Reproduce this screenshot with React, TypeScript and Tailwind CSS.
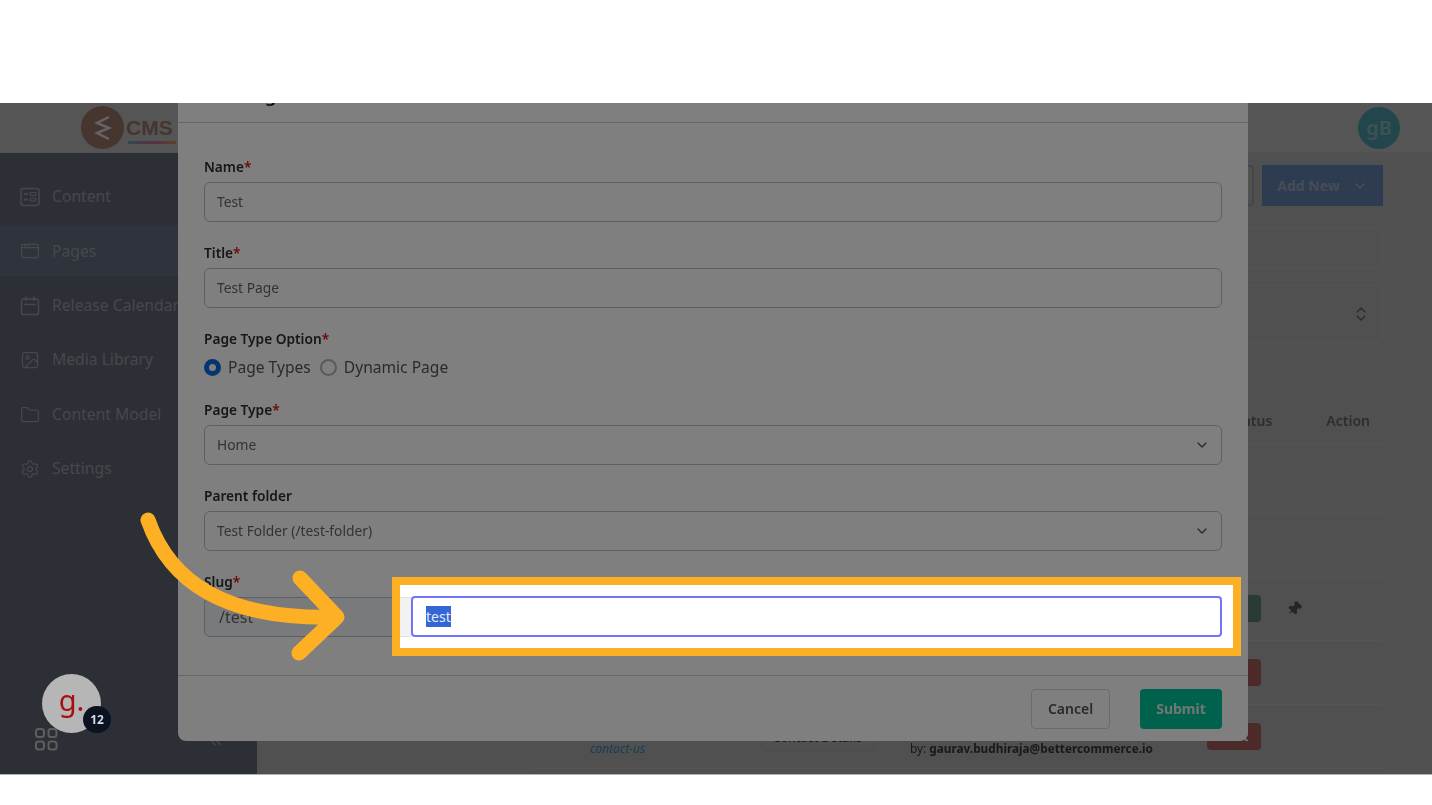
import { AppWindow, ChevronDown, ChevronsLeft, ChevronsUpDown, Folder, Image, Pin, Settings } from "lucide-react";

// ================= SIDEBAR ICONS =================
function ContentIcon() {
  return (
    <svg width="20" height="20" viewBox="0 0 20 20" fill="none" stroke="currentColor" strokeWidth="1.5" strokeLinecap="round">
      <rect x="1" y="1.5" width="18" height="17" rx="2.5" />
      <path d="M4.5 7h2.5M4.5 12.5h2.5" strokeWidth="2" />
      <rect x="10" y="5.5" width="6" height="3" rx="1" strokeWidth="1.2" />
      <rect x="10" y="11" width="6" height="3" rx="1" strokeWidth="1.2" />
    </svg>
  );
}

function CalendarIcon() {
  return (
    <svg width="20" height="20" viewBox="0 0 20 20" fill="none" stroke="currentColor" strokeWidth="1.5" strokeLinecap="round">
      <rect x="1.5" y="3" width="17" height="15.5" rx="2" />
      <path d="M6 1v3.5M14 1v3.5M5 8.5h10" />
    </svg>
  );
}

const navItems = [
  { label: "Content", icon: <ContentIcon /> },
  { label: "Pages", icon: <AppWindow size={20} strokeWidth={1.5} />, active: true },
  { label: "Release Calendar", icon: <CalendarIcon /> },
  { label: "Media Library", icon: <Image size={20} strokeWidth={1.5} /> },
  { label: "Content Model", icon: <Folder size={20} strokeWidth={1.5} /> },
  { label: "Settings", icon: <Settings size={20} strokeWidth={1.5} /> },
];

const rowBadges = [
  { id: 1, color: "" },
  { id: 2, color: "" },
  { id: 3, color: "bg-[#557568]", pin: true },
  { id: 4, color: "bg-[#9a5454]" },
  { id: 5, color: "bg-[#9a5454]", label: "Start", slug: "contact-us", type: "Contact Details" },
];

// ================= FORM PARTS =================
function Label({ text, required }: { text: string; required?: boolean }) {
  return (
    <p className="h-5 text-[13.7px] leading-5 font-semibold text-[#2e2e2e]">
      {text}
      {required && <span className="text-[#d01515]">*</span>}
    </p>
  );
}

function Field({ value, select }: { value: string; select?: boolean }) {
  return (
    <div className="mt-[5px] mb-[21px] flex h-10 items-center justify-between rounded-md border-[1.5px] border-[#bdbfc4] bg-white pr-[11px] pl-3 text-[13.8px] text-[#666666]">
      <span>{value}</span>
      {select && <ChevronDown size={16} strokeWidth={2} className="text-[#555555]" />}
    </div>
  );
}

function Radio({ label, checked }: { label: string; checked?: boolean }) {
  return (
    <span className="flex items-center gap-[7px] text-[15.6px] leading-5 text-[#555555]">
      {checked ? (
        <span className="h-[17px] w-[17px] rounded-full border-[5px] border-[#0a6ae0] bg-white" />
      ) : (
        <span className="h-[17px] w-[17px] rounded-full border-2 border-[#b5b5b5] bg-white" />
      )}
      {label}
    </span>
  );
}

// ================= COMPONENT =================
export default function App() {
  return (
    <div className="flex h-[805px] w-full flex-col overflow-hidden bg-white [font-family:'Noto_Sans',sans-serif]">
      <div className="h-[103px] shrink-0" />

      <div className="relative h-[671px] shrink-0 overflow-hidden bg-[#a0a0a0]">
        {/* PAGE BEHIND THE DIALOG */}
        <div className="flex h-full flex-col blur-[0.5px]">
          <header className="flex h-[50px] shrink-0 items-center justify-between border-b border-[#a4a4a4] bg-[#aaaaaa] pr-[32px] pl-[81px]">
            <div className="flex items-center gap-[2px]">
              <span className="flex h-[43px] w-[43px] items-center justify-center rounded-full bg-[#8f6a60]">
                <svg width="20" height="26" viewBox="0 0 20 26" fill="none" stroke="#c8c8c8" strokeWidth="2.5">
                  <path d="M16 2 4 8l12 5L4 18l12 6" />
                </svg>
              </span>
              <span className="relative text-[21px] leading-6 font-bold text-[#8f6a62] [font-family:'Liberation_Sans',sans-serif]">
                CMS
                <span className="absolute top-[25px] left-[2px] h-[3px] w-[48px] bg-gradient-to-r from-[#5f8fa8] via-[#a8608a] to-[#b88450]" />
              </span>
            </div>
            <span className="flex h-[42px] w-[42px] items-center justify-center rounded-full bg-[#478a99] text-xl font-semibold text-[#7aa4ac]">
              gB
            </span>
          </header>

          <div className="flex min-h-0 flex-1">
            <aside className="flex w-[257px] shrink-0 flex-col gap-[4.4px] bg-[#5a5e6e] pt-[19px] text-[#8e8f96]">
              {navItems.map((item) => (
                <div
                  key={item.label}
                  className={`flex h-[50px] items-center gap-3 pl-5 text-[15.7px] ${item.active ? "bg-[#5f6679]" : ""}`}
                >
                  {item.icon}
                  <span className="whitespace-nowrap">{item.label}</span>
                </div>
              ))}
              <div className="mt-auto flex justify-end pr-[32px] pb-[24px] text-[#8a8a8a]">
                <ChevronsLeft size={18} />
              </div>
            </aside>

            <main className="flex min-w-0 flex-1 flex-col pr-[49px] pl-[274px]">
              <div className="flex h-[75px] shrink-0 items-start justify-end gap-2 pt-[12px]">
                <div className="h-[41px] w-[120px] rounded-sm border-2 border-[#8c8c8c]" />
                <button className="flex h-[41px] w-[121px] items-center justify-center gap-3 bg-[#5c78a4] text-sm font-bold text-[#8c98ae]">
                  Add New
                  <ChevronDown size={16} strokeWidth={2.5} />
                </button>
              </div>
              <div className="h-[41px] shrink-0 rounded-sm border border-[#a8a8a8]" />
              <div className="mt-[16px] flex h-[58px] shrink-0 items-center justify-end rounded-sm border border-[#a8a8a8] pr-3 text-[#5a5a5a]">
                <ChevronsUpDown size={18} />
              </div>

              <div className="mt-[54px] flex h-[48px] shrink-0 items-center justify-end border-b border-[#a8a8a8] text-sm font-semibold text-[#5a5a5a]">
                <span className="mr-[54px]">Status</span>
                <span className="mr-[13px]">Action</span>
              </div>
              <div className="h-[5px] shrink-0" />
              {rowBadges.map((row) => (
                <div key={row.id} className="flex h-[63.8px] shrink-0 items-center border-b border-[#a8a8a8] pl-[59px] text-sm">
                  <span className="mt-6 w-[170px] text-xs text-[#2f7da8] italic">{row.slug}</span>
                  <span className="w-[150px]">
                    {row.type && (
                      <span className="rounded-lg border border-[#969696] px-3 py-1 text-xs font-semibold whitespace-nowrap text-[#333333]">
                        {row.type}
                      </span>
                    )}
                  </span>
                  <span className="mt-6 w-[297px] text-[11.8px] whitespace-nowrap text-[#333333]">
                    {row.slug && (
                      <>
                        by: <b>gaurav.budhiraja@bettercommerce.io</b>
                      </>
                    )}
                  </span>
                  {row.color && (
                    <span className={`flex h-[27px] w-[54px] items-center justify-center rounded text-xs font-semibold text-white ${row.color}`}>
                      {row.label}
                    </span>
                  )}
                  {row.pin && <Pin size={15} fill="currentColor" className="ml-[26px] rotate-45 text-[#4a4a4a]" />}
                </div>
              ))}
            </main>
          </div>
        </div>

        {/* DIALOG */}
        <div className="absolute top-[-40px] left-[178px] w-[1070px] rounded-b-lg bg-white blur-[0.3px]">
          <div className="h-[60px] border-b-[1.5px] border-[#cfcfcf] px-[26px] pt-[18px]">
            <p className="text-lg leading-7 font-semibold text-[#222222]">Add Page</p>
          </div>

          <div className="px-[26px] pt-[34px] pb-[17px]">
            <Label text="Name" required />
            <Field value="Test" />
            <Label text="Title" required />
            <Field value="Test Page" />
            <Label text="Page Type Option" required />
            <div className="mt-2 mb-[23px] flex gap-[9px]">
              <Radio label="Page Types" checked />
              <Radio label="Dynamic Page" />
            </div>
            <Label text="Page Type" required />
            <Field value="Home" select />
            <Label text="Parent folder" />
            <Field value="Test Folder (/test-folder)" select />
            <Label text="Slug" required />
            <div className="mt-[5px] mb-[21px] flex h-10 items-center rounded-md border-[1.5px] border-[#bdbfc4] bg-[#f3f4f6] pl-[14px] text-base text-[#666666]">
              /test
            </div>
          </div>

          <div className="flex h-[66px] items-center justify-end gap-[30px] border-t-[1.5px] border-[#cfcfcf] pr-[26px]">
            <button className="h-10 w-[79px] rounded-sm border-[1.5px] border-[#d6d6d6] text-sm font-semibold text-[#555555]">
              Cancel
            </button>
            <button className="h-10 w-[82px] rounded-sm bg-[#00c49a] text-sm font-bold text-[#e0ece8]">
              Submit
            </button>
          </div>
        </div>

        {/* DIM OVER EVERYTHING */}
        <div className="absolute inset-0 bg-black/50" />

        {/* CHAT WIDGET */}
        <div className="absolute top-[571px] left-[42px] flex h-[59px] w-[59px] items-center justify-center rounded-full bg-[#b6b6b6] pb-2 text-[29px] leading-none text-[#a80f0f] blur-[0.3px]">
          g.
          <span className="absolute top-[32px] left-[41px] flex h-[27px] w-[28px] items-center justify-center rounded-full bg-[#0b1220] text-xs font-bold text-[#d8dce4]">
            12
          </span>
        </div>
        <svg className="absolute top-[625px] left-[35px]" width="23" height="23" viewBox="0 0 23 23" fill="none" stroke="#5e5e5e" strokeWidth="2">
          <rect x="1" y="1" width="8" height="8" rx="2.5" />
          <rect x="13.5" y="1" width="8" height="8" rx="2.5" />
          <rect x="1" y="13.5" width="8" height="8" rx="2.5" />
          <rect x="13.5" y="13.5" width="8" height="8" rx="2.5" />
        </svg>

        {/* HIGHLIGHTED SLUG INPUT */}
        <div className="absolute top-[474px] left-[392px] flex h-[79px] w-[849px] items-center border-8 border-[#feb024] bg-white">
          <div className="h-[40px] w-[11px] border-y border-[#e2e2e2] bg-[#f2f2f2]" />
          <div className="flex h-[41px] w-[811px] items-center rounded-[4px] border-2 border-[#6f74f8] pl-[13px] text-sm">
            <span className="bg-[#3367d6] leading-[21px] text-[#e4ecfa]">test</span>
          </div>
        </div>

        {/* ARROW */}
        <svg className="pointer-events-none absolute inset-0" width="1432" height="671" viewBox="0 0 1432 671" fill="none" stroke="#feb024" strokeWidth="15" strokeLinecap="round" strokeLinejoin="round">
          <path d="M148 417C170 480 226 517 336 514" />
          <path d="M300 475 337 514 299 550" />
        </svg>
      </div>

      <div className="flex-1 border-t border-[#b0b0b0] bg-white" />
    </div>
  );
}
